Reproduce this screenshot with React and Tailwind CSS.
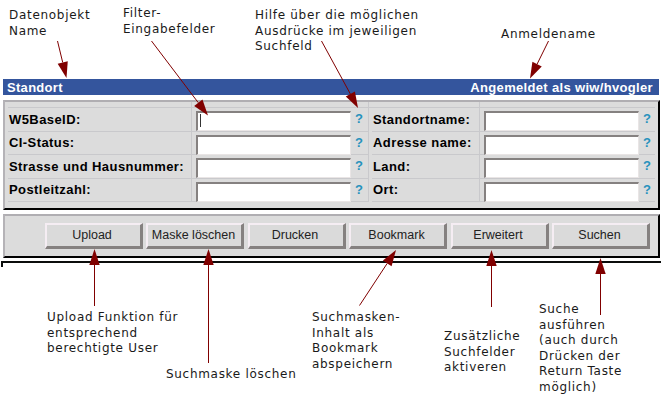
const rows = [
  ['W5BaseID:', 'Standortname:'],
  ['CI-Status:', 'Adresse name:'],
  ['Strasse und Hausnummer:', 'Land:'],
  ['Postleitzahl:', 'Ort:'],
];

const buttons = ['Upload', 'Maske löschen', 'Drucken', 'Bookmark', 'Erweitert', 'Suchen'];

const notes = [
  { at: 'left-[9px] top-[8px]', lines: ['Datenobjekt', 'Name'] },
  { at: 'left-[123px] top-[6px]', lines: ['Filter-', 'Eingabefelder'] },
  { at: 'left-[255px] top-[8px]', lines: ['Hilfe über die möglichen', 'Ausdrücke im jeweiligen', 'Suchfeld'] },
  { at: 'left-[501px] top-[27px]', lines: ['Anmeldename'] },
  { at: 'left-[47px] top-[310px]', lines: ['Upload Funktion für', 'entsprechend', 'berechtigte User'] },
  { at: 'left-[166px] top-[367px]', lines: ['Suchmaske löschen'] },
  { at: 'left-[312px] top-[310px]', lines: ['Suchmasken-', 'Inhalt als', 'Bookmark', 'abspeichern'] },
  { at: 'left-[444px] top-[329px]', lines: ['Zusätzliche', 'Suchfelder', 'aktiveren'] },
  { at: 'left-[539px] top-[302px]', lines: ['Suche', 'ausführen', '(auch durch', 'Drücken der', 'Return Taste', 'möglich)'] },
];

// Each arrow: start point, then tip point
const arrows = [
  [57.5, 41, 66.5, 78],
  [151.5, 41, 208, 115.5],
  [321.5, 41, 358, 108],
  [548.5, 41, 530, 78.5],
  [94.5, 306, 94.5, 249],
  [208.5, 363, 208.5, 249],
  [359.5, 305.5, 396, 250],
  [491.5, 307, 491.5, 250],
  [600.5, 315, 600.5, 258],
];

function Arrow({ points: [x1, y1, x2, y2] }) {
  const len = Math.hypot(x2 - x1, y2 - y1);
  const ux = (x2 - x1) / len;
  const uy = (y2 - y1) / len;
  const bx = x2 - ux * 16;
  const by = y2 - uy * 16;
  return (
    <g>
      <line x1={x1} y1={y1} x2={bx} y2={by} stroke="#800000" strokeWidth="1" />
      <polygon points={`${x2},${y2} ${bx - uy * 5.2},${by + ux * 5.2} ${bx + uy * 5.2},${by - ux * 5.2}`} fill="#800000" />
    </g>
  );
}

function Field({ label, labelWidth, caret }) {
  return (
    <>
      <div className={`${labelWidth} flex shrink-0 items-center border-r border-b border-[#c9c9cc] pl-px text-[13px] font-bold tracking-[0.42px] text-black`}>
        <span className="whitespace-nowrap">{label}</span>
      </div>
      <div className="flex flex-1 border-b border-[#c9c9cc] pt-[3px] pl-[4px]">
        <div className="h-[20px] w-[155px] shrink-0 border-t-2 border-l-2 border-r border-b border-t-[#858180] border-l-[#858180] border-r-[#e9e5e5] border-b-[#e9e5e5] bg-white">
          {caret && <div className="mt-px ml-[2px] h-[13px] w-px bg-[#333]" />}
        </div>
        <span className="ml-[4px] text-[13px] leading-[15px] font-bold text-[#2792bd]">?</span>
      </div>
    </>
  );
}

export default function App() {
  return (
    <div className="relative h-[402px] w-[664px] overflow-hidden bg-white pt-[79px] font-['Liberation_Sans',Arial,sans-serif]">
      <div className="ml-[3px] w-[657px]">
        <header className="flex h-[16px] w-[656px] items-center justify-between bg-[#34559d] pr-[6px] pl-[4px] text-[13px] leading-none font-bold text-white">
          <span className="tracking-[0.3px]">Standort</span>
          <span className="tracking-[0.33px]">Angemeldet als wiw/hvogler</span>
        </header>

        <section className="mt-[5px] flex h-[110px] flex-col border-t-2 border-r-2 border-b-2 border-l-2 border-t-[#b0aeb2] border-r-black border-b-black border-l-[#b5b3b7] bg-[#dcdcdc]">
          <div className="mx-[3px] flex h-[6px] shrink-0 border-b border-[#c9c9cc]">
            <div className="w-[184px] border-r border-[#c9c9cc]" />
            <div className="w-[177px] border-r border-[#c9c9cc]" />
            <div className="w-[111px] border-r border-[#c9c9cc]" />
          </div>
          {rows.map(([left, right], i) => (
            <div key={left} className="mx-[3px] flex h-[23.5px] shrink-0">
              <div className="flex w-[361px] border-r border-[#c9c9cc]">
                <Field label={left} labelWidth="w-[184px]" caret={i === 0} />
              </div>
              <div className="flex flex-1 pl-[3px]">
                <Field label={right} labelWidth="w-[108px]" />
              </div>
            </div>
          ))}
        </section>

        <section className="mt-[4px] flex h-[44px] items-start justify-end gap-[3.5px] border-t-2 border-r-2 border-b-2 border-l-2 border-t-[#b0aeb2] border-r-black border-b-black border-l-[#b5b3b7] bg-[#dcdcdc] pt-[7px] pr-[8px]">
          {buttons.map((label) => (
            <button
              key={label}
              className="flex h-[26px] w-[98px] shrink-0 items-center justify-center border-t-2 border-r-3 border-b-3 border-l-2 border-t-[#f5edf3] border-r-[#858180] border-b-[#858180] border-l-[#f5edf3] bg-[#dadada] pr-[2px] text-[12.5px] leading-none whitespace-nowrap text-[#222]"
            >
              {label}
            </button>
          ))}
        </section>
      </div>
      <div className="mt-[3px] ml-px h-[6px] w-[660px] border-t-2 border-l-2 border-t-[#0b0d0c] border-l-[#0b0d0c] bg-white" />

      {notes.map(({ at, lines }) => (
        <p key={lines[0]} className={`absolute ${at} font-['DejaVu_Sans',sans-serif] text-[12px] leading-[15.6px] tracking-[0.7px] whitespace-nowrap text-[#1a1a1a]`}>
          {lines.map((line) => (
            <span key={line} className="block">{line}</span>
          ))}
        </p>
      ))}

      <svg className="pointer-events-none absolute inset-0" width="664" height="402">
        {arrows.map((points) => (
          <Arrow key={points.join()} points={points} />
        ))}
      </svg>
    </div>
  );
}
